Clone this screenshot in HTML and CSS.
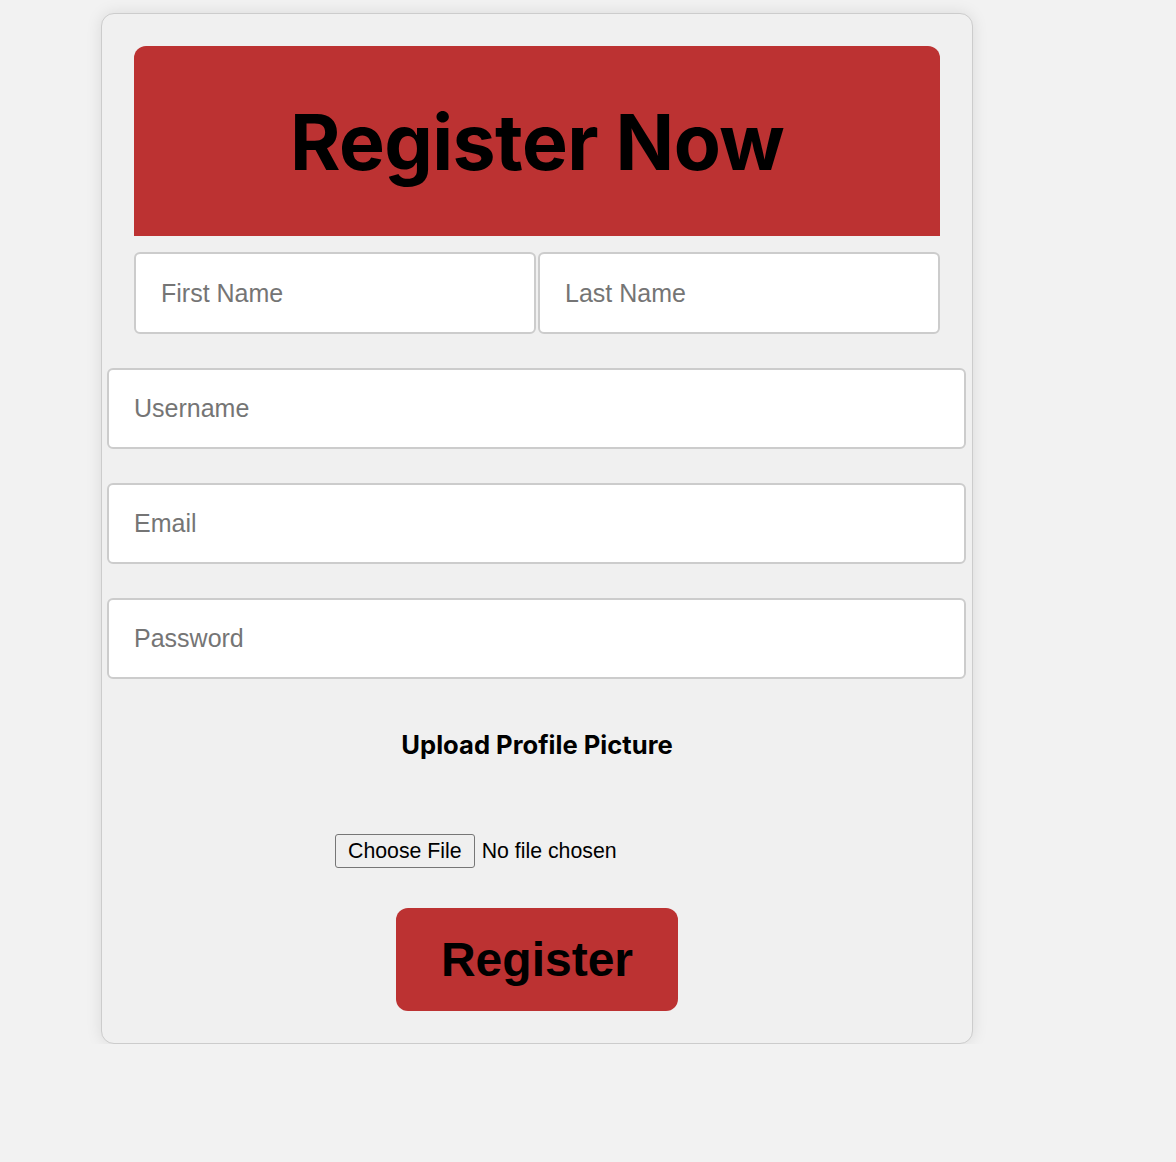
FILE: index.html
```html
<!DOCTYPE html>
<html lang="en">
<head>
<meta charset="utf-8">
<title>Register</title>
<link rel="stylesheet" href="styles.css">
</head>
<body>
<form class="card">
  <div class="header"><h1 class="title">Register Now</h1></div>
  <div class="name-row">
    <input class="field half" type="text" placeholder="First Name">
    <input class="field half" type="text" placeholder="Last Name">
  </div>
  <input class="field wide" type="text" placeholder="Username">
  <input class="field wide" type="email" placeholder="Email">
  <input class="field wide" type="password" placeholder="Password">
  <label class="upload-label" for="pic">Upload Profile Picture</label>
  <input class="file" id="pic" type="file">
  <button class="submit" type="button">Register</button>
</form>
</body>
</html>
```
FILE: styles.css
```css
html, body {
  margin: 0;
  padding: 0;
  background: #f2f2f2;
}
body {
  padding: 13px 0 0 101px;
}
.card {
  box-sizing: border-box;
  width: 872px;
  padding: 32px;
  border: 1px solid #cccccc;
  border-radius: 13px;
  background: #f0f0f0;
  box-shadow: 0 0 16px rgba(0, 0, 0, 0.1);
  display: flex;
  flex-direction: column;
  align-items: stretch;
}
.header {
  height: 190px;
  background: #bc3232;
  border-radius: 12px 12px 0 0;
  display: flex;
  align-items: center;
  justify-content: center;
}
.title {
  margin: 0;
  font-family: Inter, "Liberation Sans", sans-serif;
  font-weight: 700;
  font-size: 77px;
  letter-spacing: -0.6px;
  color: #000;
  line-height: 1;
  padding-top: 2px;
}
.name-row {
  display: flex;
  gap: 2px;
  margin-top: 16px;
}
.field {
  box-sizing: border-box;
  height: 82px;
  border: 2px solid #cccccc;
  border-radius: 6px;
  background: #fff;
  padding: 0 25px;
  font-family: "Liberation Sans", Arial, sans-serif;
  font-size: 25px;
  color: #333;
  outline: none;
}
.field::placeholder {
  color: #757575;
}
.half {
  flex: 1 1 0;
  min-width: 0;
}
.wide {
  margin: 34px -26px 0 -27px;
  height: 81px;
}
.upload-label {
  margin-top: 51px;
  text-align: center;
  font-family: Inter, "Liberation Sans", sans-serif;
  font-weight: 700;
  font-size: 25.6px;
  line-height: 30px;
  color: #000;
}
.file {
  align-self: center;
  width: 404px;
  margin-top: 74px;
  font-family: "Liberation Sans", Arial, sans-serif;
  font-size: 21.3px;
  color: #000;
}
.file::file-selector-button {
  font-family: inherit;
  font-size: inherit;
  height: 34px;
  padding: 0 12px;
  margin-right: 7px;
  border: 1px solid #767676;
  border-radius: 3px;
  background: #efefef;
  color: #000;
}
.submit {
  align-self: center;
  margin-top: 40px;
  width: 282px;
  height: 103px;
  border: none;
  border-radius: 12px;
  background: #bc3232;
  color: #000;
  font-family: "Liberation Sans", Arial, sans-serif;
  font-weight: 700;
  font-size: 48px;
  padding: 0;
}
```
